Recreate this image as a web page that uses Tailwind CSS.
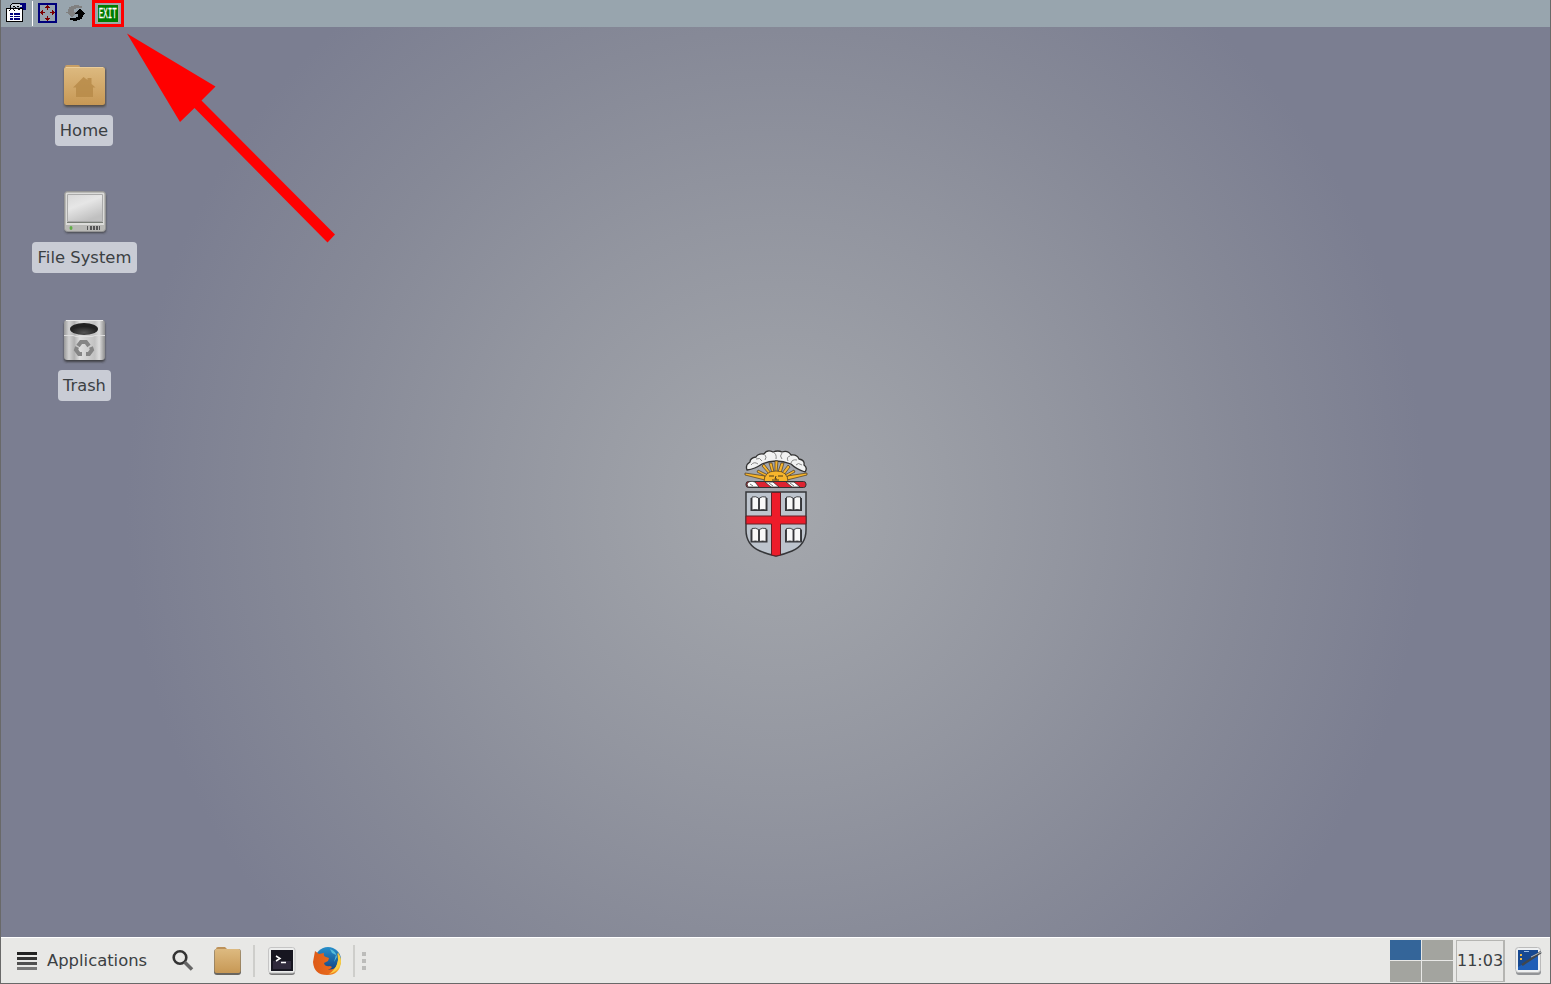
<!DOCTYPE html>
<html lang="en">
<head>
<meta charset="utf-8">
<title>Desktop</title>
<script src="https://cdn.jsdelivr.net/npm/@tailwindcss/browser@4"></script>
</head>
<body class="w-[1551px] h-[984px] overflow-hidden">
<div class="relative flex h-[984px] w-[1551px] flex-col border-x border-b border-[#696969] bg-[radial-gradient(circle_at_775px_505px,#a5a8ad_0px,#9396a0_285px,#868997_475px,#7b7e91_650px)] font-['DejaVu_Sans',sans-serif] text-[#3b4043]">
  <!-- Toolbar -->
  <header class="flex h-[27px] shrink-0 items-start bg-[#98a5ae]">
    <svg class="ml-[5px] mt-[3px]" width="21" height="20" shape-rendering="crispEdges"><path fill="#00007b" d="M14 0h6v7h-6z"/><path fill="#000" d="M0 5h17v14H0z"/><path fill="#fff" d="M1 6h15v12H1z"/><path fill="#000" d="M6 0h8v1H6zM5 1h1v1H5zM4 2h1v3H4z"/><path fill="#c8d0d4" d="M6 1h8v1H6zM5 2h11v2H5z"/><path fill="#000" d="M7 3h2v1H7zM11 3h2v1h-2zM5 5h2v1H5zM4 6h1v1H4zM3 7h1v1H3zM9 4h1v1H9zM10 5h1v1h-1zM7 6h1v1H7zM8 7h1v1H8zM12 6h2v1h-2z"/><path fill="#00007b" d="M4 10h3v2H4zM8 10h6v2H8zM4 13h3v1H4zM8 13h6v1H8zM4 15h3v2H4zM8 15h6v2H8z"/></svg>
    <div class="ml-[5px] mt-px h-[25px] w-px bg-white"></div>
    <svg class="ml-[5px] mt-[3px]" width="20" height="20" shape-rendering="crispEdges"><path fill="none" stroke="#00007b" stroke-width="2" d="M1 1h17v18H1z"/><path fill="#7b0000" d="M9 2h1v1h1v1h1v1h-2v2H9V5H7V4h1V3h1zM9 18h1v-1h1v-1h1v-1h-2v-2H9v2H7v1h1v1h1zM2 10V9h1V8h1V7h1v2h2v1H5v2H4v-1H3v-1zM17 10V9h-1V8h-1V7h-1v2h-2v1h2v2h1v-1h1v-1z"/></svg>
    <svg class="ml-[8px] mt-[5px]" width="20" height="17" shape-rendering="crispEdges"><path fill="#808080" d="M2 7V4h1V2h2V1h3V0h5v1h3v2h-6v1H8v3h3v1h-1v1H9v1H8v1H7v1H5v-1H4v-1H3V9H2V8H0V7z"/><path fill="#000" d="M17 10v2h-1v2h-2v1h-3v1H7v-1H4v-2h6v-1h2V9H9V8h1V7h1V6h1V5h1V4h2v1h1v1h1v1h1v1h1v1h-1v1z"/></svg>
    <div class="ml-[6px] flex h-[27px] w-[32px] shrink-0 items-center justify-center border-[3px] border-[#f00]">
      <svg class="shrink-0 overflow-visible" width="22" height="19"><path d="M0 0h22v19H0z" fill="#a8aaa2"/><path fill="#007b00" d="M1 1h20v17H1z"/><text x="1.800" y="14" font-family="Liberation Mono, monospace" font-size="15" textLength="18" lengthAdjust="spacingAndGlyphs" fill="#fff" stroke="#fff" stroke-width=".3">EXIT</text></svg>
    </div>
  </header>

  <!-- Desktop -->
  <main class="flex flex-1 flex-col text-[16.400px] leading-[31px]">
    <div class="flex w-[167px] flex-col">
      <div class="flex h-[127.5px] flex-col items-center pt-[36px]">
        <svg class="mr-px shrink-0" width="46" height="46"><defs><linearGradient id="folder" x2="0" y2="1"><stop stop-color="#ddba80"/><stop offset="1" stop-color="#c79855"/></linearGradient><filter id="shade" x="-20%" y="-20%" width="140%" height="140%"><feGaussianBlur stdDeviation=".8"/></filter></defs><rect x="3" y="5" width="42" height="39" rx="3" fill="#484339" opacity=".8" filter="url(#shade)"/><path fill="#c89f65" d="M4 4q0-2 2-2h11q2 0 2 2h20q4 0 4 3v33H3V7z"/><rect x="3" y="4" width="41" height="38" rx="2.500" fill="url(#folder)"/><path stroke="#ebcd99" d="M5 4.500h37"/><path fill="#b78b49" opacity=".85" d="M12 24.500L22.500 14l4 3v-2h4v6l4 3.500H32V34H15v-9.500z"/></svg>
        <div class="mt-[6px] mr-px rounded-[4px] bg-[#c9ccd5] px-[5px]">Home</div>
      </div>
      <div class="flex h-[128px] flex-col items-center pt-[35.5px]">
        <svg class="shrink-0" width="46" height="46"><defs><linearGradient id="disk" x2=".5" y2="1"><stop stop-color="#d8d8d8"/><stop offset=".45" stop-color="#e6e6e6"/><stop offset="1" stop-color="#c0c0c0"/></linearGradient></defs><rect x="3" y="4" width="41" height="39" rx="3" fill="#303030" opacity=".75" filter="url(#shade)"/><rect x="2.500" y="1.500" width="41" height="40" rx="3" fill="#b9b9b6" stroke="#969696"/><path fill="#dcdcda" d="M4 3h38v32H4z"/><path fill="url(#disk)" stroke="#aaa" d="M5.500 4.500h35v27h-35z"/><path stroke="#777c75" d="M5 32.500h36"/><ellipse cx="9" cy="38" rx="1.500" ry="2" fill="#60ad45"/><path fill="#555" d="M25 36h1v4h-1zM28 36h2v4h-2zM31 36h2v4h-2zM34 36h2v4h-2zM37 36h1v4h-1z"/></svg>
        <div class="mt-[6px] rounded-[4px] bg-[#c9ccd5] px-[5.500px]">File System</div>
      </div>
      <div class="flex h-[128px] flex-col items-center pt-[35px]">
        <svg class="mr-px shrink-0" width="46" height="46"><defs><linearGradient id="bin"><stop stop-color="#999"/><stop offset=".12" stop-color="#d2d2d2"/><stop offset=".25" stop-color="#b0b0b0"/><stop offset=".38" stop-color="#dedede"/><stop offset=".75" stop-color="#c2c2c2"/><stop offset=".86" stop-color="#ddd"/><stop offset="1" stop-color="#8d8d8d"/></linearGradient><radialGradient id="hole" cy=".8"><stop stop-color="#555"/><stop offset="1" stop-color="#222"/></radialGradient></defs><rect x="3" y="4" width="41" height="40" rx="3" fill="#303030" opacity=".8" filter="url(#shade)"/><rect x="3" y="2" width="41" height="40" rx="3" fill="url(#bin)"/><path stroke="#e8e8e8" d="M5 2.500h37"/><ellipse cx="23" cy="11" rx="14" ry="6" fill="url(#hole)"/><path stroke="#dedede" fill="none" d="M3 17.500h9l3 1h16l3-1h10"/><g fill="none" stroke="#858585" stroke-width="4"><path d="M17 28l3-4h5l3 4"/><path d="M30 29l1 3-3 4h-3"/><path d="M21 36h-3l-3-4 1-3"/></g></svg>
        <div class="mt-[6px] rounded-[4px] bg-[#c9ccd5] px-[5px] text-[16.200px]">Trash</div>
      </div>
    </div>
  </main>

  <!-- University crest centred on the wallpaper -->
  <svg class="absolute left-[742px] top-[448px]" width="66" height="110">
    <path d="M4 22q-2-5 3-8 0-4 6-5 2-4 8-3 3-5 9-2 5-2 9 0 6-2 9 3 6-1 8 4 6 1 5 6 4 3 1 7-9-3-14-8-8-3-15-3t-14 3Q12 21 4 22Z" fill="#f1f2f2" stroke="#333" stroke-width="1.300"/>
    <path d="M8 17q3-4 7-1M13 11q4-2 6 2M22 7q2 2 0 5M30 4q4 2 3 7M39 5q-3 3 0 6M47 8q-4 1-2 5M54 12q-5-1-6 3M59 17q-4-3-6 0" fill="none" stroke="#888"/>
    <g stroke="#4d3b1f" stroke-width=".7" fill="#f7b52c"><path d="M2 25l20 3v4L2 27zM64 25l-20 3v4l20-5z"/><path d="M24 29l-10-5 1-2 10 5zM26 26l-7-8 2-2 7 9zM29 25l-3-10h3l2 9zM32 24l0-11h3l-1 11zM35 24l3-9h3l-3 10zM39 25l6-8 2 2-6 8zM42 27l9-5 1 2-9 5z"/><path d="M21 34q0-11 12-11t12 11z"/></g>
    <path d="M26 28h5M35 28h5M33 28l-1 3h2M29 32h7" stroke="#493b1e" fill="none"/>
    <rect x="3" y="33.500" width="60" height="6" rx="2.500" fill="#dd2431" stroke="#333"/>
    <path d="M4 36q2-4 8-2l4 5H5zM22 34h8l6 5h-8zM43 34h8l6 5h-8z" fill="#fff" stroke="#333" stroke-width=".8"/><path d="M7 36l3 2M26 35l4 3M47 35l4 3" stroke="#777"/>
    <path d="M3 44h60v38q0 15-14 21-7 3-16 5-9-2-16-5Q3 97 3 82z" fill="#bdc4cd" stroke="#36373a" stroke-width="1.500"/>
    <path d="M28.500 44.500h9V68H63v8H37.500v31l-4.500 1-4.500-1V76H3v-8h25.500z" fill="#ed1c2a" stroke="#622126"/>
    <g id="book"><path d="M7.500 50h17v13h-17z" fill="#36373a"/><path d="M9 49q4-1 6.500 1v12q-3-1-6.500 0zM16.500 50q2.500-2 6.500-1v13q-3.500-1-6.500 0z" fill="#f8f8f8" stroke="#36373a" stroke-width=".9"/></g>
    <use href="#book" x="34.500"/><use href="#book" y="31.500"/><use href="#book" x="34.500" y="31.500"/>
  </svg>

  <!-- Callout arrow -->
  <svg class="absolute left-[126px] top-[33px]" width="210" height="211"><path fill="#f00" d="M0 .5L88.500 53.500 74.500 67.500 208 201.500 200.500 209.500 67.500 75 53 89z"/></svg>

  <!-- Panel -->
  <footer class="flex h-[46px] shrink-0 items-center border-t border-white bg-[#e8e8e6]">
    <svg class="ml-[16px]" width="20" height="18" shape-rendering="crispEdges"><path fill="#222" d="M0 0h20v3H0z"/><path fill="#333" d="M0 5h20v3H0z"/><path fill="#505050" d="M0 10h20v3H0z"/><path fill="#777" d="M0 15h20v3H0z"/></svg>
    <span class="ml-[10px] w-[101px] whitespace-nowrap text-[16.400px] leading-[20px]">Applications</span>
    <svg class="ml-[24px]" width="22" height="23"><g fill="none"><circle cx="8" cy="8.500" r="6.300" stroke="#333" stroke-width="2.600"/><path d="M12.500 13l7.500 7.500" stroke="#666" stroke-width="3.500"/></g></svg>
    <svg class="ml-[19px] mt-px" width="29" height="28"><rect x="1" y="2" width="27" height="26" rx="3" fill="#696660"/><path fill="#bd925a" d="M3 2q0-2 2-2h7l2 2v4H3z"/><rect x="1.500" y="2" width="26" height="24" rx="2" fill="url(#folder)"/></svg>
    <div class="ml-[11px] h-[32px] w-[2px] bg-[#cececb]"></div>
    <svg class="ml-[13px] mt-px" width="28" height="28"><rect x="1" y="2" width="26" height="26" rx="3" fill="#777"/><rect x=".5" y=".5" width="26.500" height="25.500" rx="2.500" fill="#ecedec" stroke="#c5c5c5"/><path fill="#171620" d="M3 3h22v21H3z"/><path fill="#302a3c" d="M5 14h18v8H5z"/><path d="M8 9l4 2.500L8 14M13 15.500h5" stroke="#fff" stroke-width="1.500" fill="none"/></svg>
    <svg class="ml-[16px]" width="30" height="30"><defs><linearGradient id="globe" x2="0" y2="1"><stop stop-color="#278fca"/><stop offset="1" stop-color="#123b7b"/></linearGradient><linearGradient id="fox" x2="1"><stop stop-color="#dd5a18"/><stop offset=".65" stop-color="#e96a1b"/><stop offset="1" stop-color="#ffd03a"/></linearGradient></defs><circle cx="16" cy="14" r="13" fill="url(#globe)"/><path d="M18 3q6 2 7 8l-3 5 2-7-4-2z" fill="#58bdd9"/><path d="M3 5l4 3 5-1q-1 3 2 4l3 1-1 3-4 2q1 4 6 3l2 1q-2 3-5 2 7 2 10-4 2-5 0-12 4 3 4 9-1 13-14 13Q2 29 1 16z" fill="url(#fox)"/><path d="M26 6q5 8 1 15-4 6-10 7 6-4 8-10 2-6 1-12z" fill="#fbcf45"/></svg>
    <div class="ml-[11px] h-[32px] w-[2px] bg-[#cececb]"></div>
    <div class="ml-[7px] flex flex-col gap-[3px]"><i class="size-[4px] bg-[#bcbcba]"></i><i class="size-[4px] bg-[#bcbcba]"></i><i class="size-[4px] bg-[#bcbcba]"></i></div>
    <div class="ml-auto grid h-[42px] w-[63px] grid-cols-[31px_31px] grid-rows-[20px_21px] gap-px bg-[#e8e8e6]"><div class="bg-[#346599]"></div><div class="bg-[#a3a49f]"></div><div class="bg-[#a3a49f]"></div><div class="bg-[#a3a49f]"></div></div>
    <div class="ml-[3px] flex h-[42px] w-[49px] items-center justify-center border border-r-2 border-[#b5b5b2] text-[16px] leading-[20px]">11:03</div>
    <svg class="ml-[10px] mr-[8px] mt-px" width="27" height="28"><rect x="1" y="2" width="25" height="26" rx="3" fill="#929497"/><rect x=".5" y=".5" width="25" height="25" rx="3" fill="#eef0f1" stroke="#bbb"/><path d="M3 3h20v20H3z" fill="#1f5eb7"/><path d="M3 3h20v6L3 20z" fill="#174991"/><path fill="#f2bc47" d="M5 7h2v2H5zM5 11h2v2H5z"/><path fill="#9abbe1" d="M9 4h5v1H9z"/><path d="M7 18l9-6 10-7" stroke="#42474d" stroke-width="2.400" fill="none"/><path d="M16 10l10-5" stroke="#b9bdbd"/></svg>
  </footer>
</div>
</body>
</html>
